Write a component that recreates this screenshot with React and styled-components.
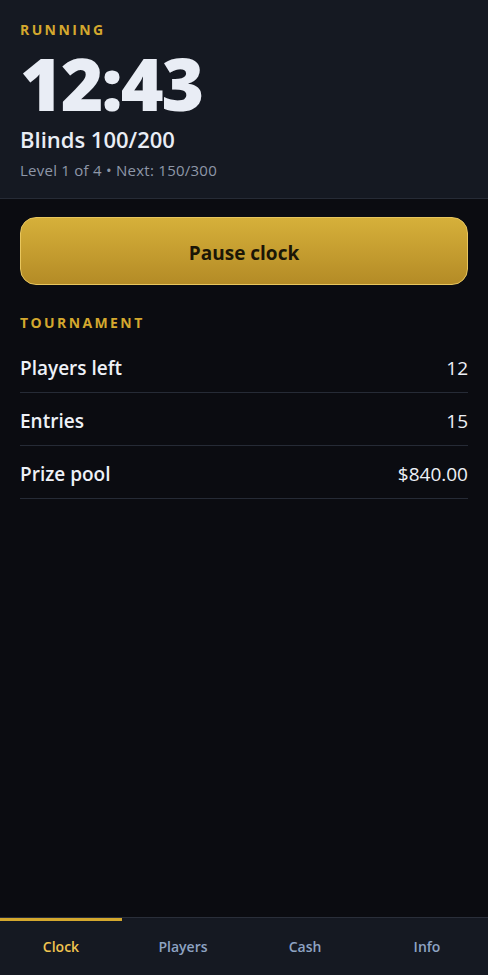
import React, { useState } from 'react';
import styled, { createGlobalStyle } from 'styled-components';

const GlobalStyle = createGlobalStyle`
  html, body {
    margin: 0;
    padding: 0;
    background: #0b0c11;
  }
  * {
    box-sizing: border-box;
  }
  body {
    font-family: "Open Sans", "Noto Sans", sans-serif;
    color: #e9edf5;
  }
`;

const Screen = styled.div`
  width: 100%;
  height: 975px;
  display: flex;
  flex-direction: column;
  background: #0b0c11;
`;

const Header = styled.header`
  background: #151922;
  border-bottom: 1px solid #262b36;
  padding: 20px 20px 18px;
  display: flex;
  flex-direction: column;
`;

const Eyebrow = styled.div`
  font-size: 14px;
  line-height: 20px;
  font-weight: 700;
  letter-spacing: 2.4px;
  text-transform: uppercase;
  color: #d4a82e;
`;

const ClockTime = styled.div`
  margin-top: 6px;
  font-size: 73px;
  line-height: 73px;
  font-weight: 800;
  letter-spacing: -2px;
  color: #e9edf5;
`;

const Blinds = styled.div`
  margin-top: 6px;
  font-size: 22px;
  line-height: 28px;
  font-weight: 600;
  color: #e9edf5;
`;

const Meta = styled.div`
  margin-top: 7px;
  font-size: 15px;
  line-height: 20px;
  letter-spacing: 0.25px;
  color: #8e97a8;
`;

const Main = styled.main`
  flex: 1;
  padding: 18px 20px;
  display: flex;
  flex-direction: column;
`;

const PrimaryButton = styled.button`
  height: 68px;
  width: 100%;
  border: 1px solid #e8c65e;
  border-radius: 16px;
  background: linear-gradient(180deg, #d6b03a 0%, #b48b26 100%);
  color: #1b1606;
  font-family: inherit;
  font-size: 19px;
  font-weight: 700;
  padding-top: 4px;
  cursor: pointer;
`;

const Section = styled.section`
  margin-top: 28px;
`;

const StatList = styled.div`
  margin-top: 7px;
`;

const StatRow = styled.div`
  display: flex;
  justify-content: space-between;
  align-items: center;
  padding: 16px 0 12px;
  border-bottom: 1px solid #262b36;
  font-size: 19px;
  line-height: 24px;
`;

const StatLabel = styled.span`
  font-weight: 600;
  color: #eef1f7;
`;

const StatValue = styled.span`
  font-weight: 400;
  color: #eef1f7;
`;

const Nav = styled.nav`
  height: 58px;
  background: #151922;
  border-top: 1px solid #2a2f3a;
  display: grid;
  grid-template-columns: repeat(4, 1fr);
`;

const Tab = styled.button`
  border: none;
  border-top: 3px solid ${p => (p.$active ? '#d4a82e' : 'transparent')};
  background: transparent;
  color: ${p => (p.$active ? '#f0c44f' : '#8ea3c2')};
  font-family: inherit;
  font-size: 14px;
  font-weight: 600;
  padding: 0 0 3px;
  cursor: pointer;
`;

const stats = [
  { label: 'Players left', value: '12' },
  { label: 'Entries', value: '15' },
  { label: 'Prize pool', value: '$840.00' },
];

const tabs = ['Clock', 'Players', 'Cash', 'Info'];

const App = () => {
  const [tab, setTab] = useState('Clock');
  const [running, setRunning] = useState(true);

  return (
    <Screen>
      <GlobalStyle />
      <Header>
        <Eyebrow>{running ? 'Running' : 'Paused'}</Eyebrow>
        <ClockTime>12:43</ClockTime>
        <Blinds>Blinds 100/200</Blinds>
        <Meta>Level 1 of 4 • Next: 150/300</Meta>
      </Header>
      <Main>
        <PrimaryButton onClick={() => setRunning(!running)}>
          {running ? 'Pause clock' : 'Resume clock'}
        </PrimaryButton>
        <Section>
          <Eyebrow>Tournament</Eyebrow>
          <StatList>
            {stats.map(s => (
              <StatRow key={s.label}>
                <StatLabel>{s.label}</StatLabel>
                <StatValue>{s.value}</StatValue>
              </StatRow>
            ))}
          </StatList>
        </Section>
      </Main>
      <Nav>
        {tabs.map(t => (
          <Tab key={t} $active={t === tab} onClick={() => setTab(t)}>
            {t}
          </Tab>
        ))}
      </Nav>
    </Screen>
  );
};

export default App;
